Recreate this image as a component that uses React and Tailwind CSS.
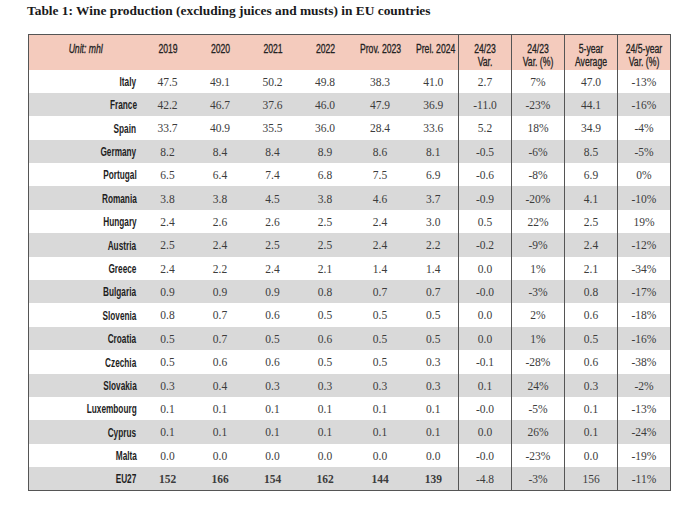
import React from "react";

const rows = [
  ["Italy", "47.5", "49.1", "50.2", "49.8", "38.3", "41.0", "2.7", "7%", "47.0", "-13%"],
  ["France", "42.2", "46.7", "37.6", "46.0", "47.9", "36.9", "-11.0", "-23%", "44.1", "-16%"],
  ["Spain", "33.7", "40.9", "35.5", "36.0", "28.4", "33.6", "5.2", "18%", "34.9", "-4%"],
  ["Germany", "8.2", "8.4", "8.4", "8.9", "8.6", "8.1", "-0.5", "-6%", "8.5", "-5%"],
  ["Portugal", "6.5", "6.4", "7.4", "6.8", "7.5", "6.9", "-0.6", "-8%", "6.9", "0%"],
  ["Romania", "3.8", "3.8", "4.5", "3.8", "4.6", "3.7", "-0.9", "-20%", "4.1", "-10%"],
  ["Hungary", "2.4", "2.6", "2.6", "2.5", "2.4", "3.0", "0.5", "22%", "2.5", "19%"],
  ["Austria", "2.5", "2.4", "2.5", "2.5", "2.4", "2.2", "-0.2", "-9%", "2.4", "-12%"],
  ["Greece", "2.4", "2.2", "2.4", "2.1", "1.4", "1.4", "0.0", "1%", "2.1", "-34%"],
  ["Bulgaria", "0.9", "0.9", "0.9", "0.8", "0.7", "0.7", "-0.0", "-3%", "0.8", "-17%"],
  ["Slovenia", "0.8", "0.7", "0.6", "0.5", "0.5", "0.5", "0.0", "2%", "0.6", "-18%"],
  ["Croatia", "0.5", "0.7", "0.5", "0.6", "0.5", "0.5", "0.0", "1%", "0.5", "-16%"],
  ["Czechia", "0.5", "0.6", "0.6", "0.5", "0.5", "0.3", "-0.1", "-28%", "0.6", "-38%"],
  ["Slovakia", "0.3", "0.4", "0.3", "0.3", "0.3", "0.3", "0.1", "24%", "0.3", "-2%"],
  ["Luxembourg", "0.1", "0.1", "0.1", "0.1", "0.1", "0.1", "-0.0", "-5%", "0.1", "-13%"],
  ["Cyprus", "0.1", "0.1", "0.1", "0.1", "0.1", "0.1", "0.0", "26%", "0.1", "-24%"],
  ["Malta", "0.0", "0.0", "0.0", "0.0", "0.0", "0.0", "-0.0", "-23%", "0.0", "-19%"],
  ["EU27", "152", "166", "154", "162", "144", "139", "-4.8", "-3%", "156", "-11%"],
];

const widths = [113, 52, 53, 52, 53, 57, 50, 53, 53, 53, 53];

// no condensed face installed: Liberation Sans squeezed horizontally
const narrow = "font-['Liberation_Sans',Arial,sans-serif]";
const serif = "font-['Liberation_Serif','Times_New_Roman',serif]";

const headers = [
  ["2019"],
  ["2020"],
  ["2021"],
  ["2022"],
  ["Prov. 2023"],
  ["Prel. 2024"],
  ["24/23", "Var."],
  ["24/23", "Var. (%)"],
  ["5-year", "Average"],
  ["24/5-year", "Var. (%)"],
];

export default function App() {
  return (
    <div className="w-[694px] h-[510px] bg-white overflow-hidden">
      <h1 className={`${serif} pl-[27px] pt-[3px] text-[13.4px] leading-[16px] font-bold text-[#1a1a1a]`}>
        Table 1: Wine production (excluding juices and musts) in EU countries
      </h1>
      <table className="ml-[28px] mt-[15px] table-fixed border-collapse border-[1.5px] border-[#555] w-[642px]">
        <colgroup>
          {widths.map((w, i) => (
            <col key={i} style={{ width: w }} />
          ))}
        </colgroup>
        <thead>
          <tr className="bg-[#f4cbbd] h-[35px]">
            <th className={`${narrow} align-top pt-[8px] text-[12px] leading-[13px] font-normal italic text-[#222] [-webkit-text-stroke:0.3px] text-center`}>
              <span className="inline-block scale-x-[0.72]">Unit: mhl</span>
            </th>
            {headers.map((h, i) => (
              <th
                key={i}
                className={`${narrow} align-top pt-[8px] text-[12px] leading-[12.5px] font-normal text-[#222] [-webkit-text-stroke:0.3px] text-center whitespace-nowrap ${i >= 6 ? "border-l border-[#555]" : ""}`}
              >
                {h.map((line, j) => (
                  <div key={j} className="scale-x-[0.72]">
                    {line}
                  </div>
                ))}
              </th>
            ))}
          </tr>
        </thead>
        <tbody>
          {rows.map((r, i) => {
            const total = r[0] === "EU27";
            return (
              <tr key={i} className={`h-[23.4px] ${i % 2 === 1 ? "bg-[#d9d9d9]" : "bg-white"}`}>
                <td className={`${narrow} pt-[2px] text-[12.5px] font-bold text-[#1e1e1e] text-right pr-[5px] whitespace-nowrap`}>
                  <span className="inline-block origin-right scale-x-[0.66]">{r[0]}</span>
                </td>
                {r.slice(1).map((v, j) => (
                  <td
                    key={j}
                    className={`${serif} pt-[2px] text-[11.5px] text-center text-[#3c3c3c] ${j >= 6 ? "border-l border-[#555]" : ""} ${total && j < 6 ? "font-bold text-[#1e1e1e]" : ""}`}
                  >
                    {v}
                  </td>
                ))}
              </tr>
            );
          })}
        </tbody>
      </table>
    </div>
  );
}
